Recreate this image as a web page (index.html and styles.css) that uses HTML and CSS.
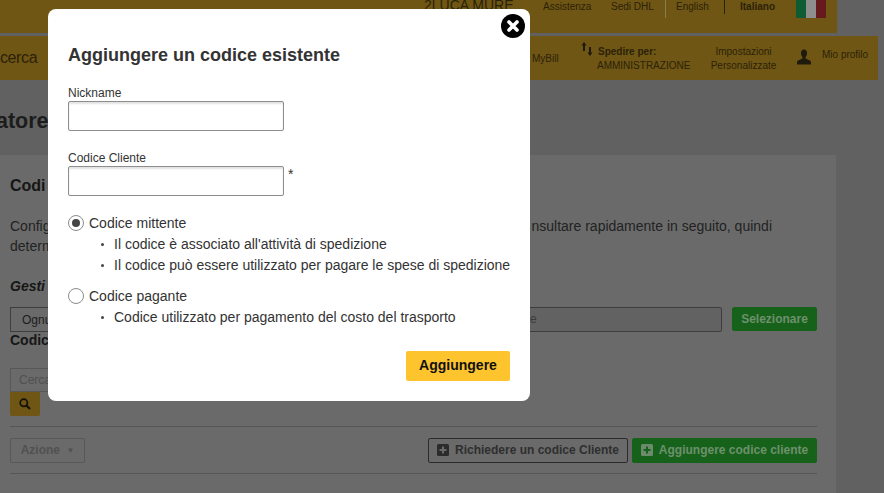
FILE: index.html
```html
<!DOCTYPE html>
<html lang="it">
<head>
<meta charset="utf-8">
<title>Aggiungere un codice esistente</title>
<link rel="stylesheet" href="styles.css">
</head>
<body>
<div class="stage">
<div class="page">
  <header class="topbar">
    <span class="user">2LUCA MURE</span>
    <a class="toplink link-a">Assistenza</a>
    <a class="toplink link-b">Sedi DHL</a>
    <i class="sep sep-a"></i>
    <a class="toplink link-c">English</a>
    <i class="sep sep-b"></i>
    <b class="toplink link-d">Italiano</b>
    <span class="flag"><i class="fg"></i><i class="fw"></i><i class="fr"></i></span>
  </header>
  <nav class="navbar">
    <span class="nav-search">cerca</span>
    <span class="nav-mybill">MyBill</span>
    <svg class="nav-swap" viewBox="0 0 12 14" width="12" height="14"><path d="M3 0 L5.500 3.500 H4 V9 H2 V3.500 H0.500 Z M8 5 H10 V10.500 H11.500 L9 14 L6.500 10.500 H8 Z" fill="#1e1a0c"/></svg>
    <div class="nav-ship"><b>Spedire per:</b><span>AMMINISTRAZIONE</span></div>
    <div class="nav-settings"><span>Impostazioni</span><span>Personalizzate</span></div>
    <svg class="nav-user" viewBox="0 0 16 16" width="16" height="16"><path d="M8 0.500 C5.800 0.500 4.800 2.200 5 4.500 C5.100 6 5.700 7.300 6.400 8 V9.500 C4.500 10.500 1.500 11 1 13 V15.500 H15 V13 C14.500 11 11.500 10.500 9.600 9.500 V8 C10.300 7.300 10.900 6 11 4.500 C11.200 2.200 10.200 0.500 8 0.500 Z" fill="#1e1a0c"/></svg>
    <span class="nav-profile">Mio profilo</span>
  </nav>
  <h1 class="page-title">atore</h1>
  <main class="panel">
    <h2 class="panel-title">Codi</h2>
    <div class="intro">
      <div class="intro-line"><span>Config</span><span>nsultare rapidamente in seguito, quindi</span></div>
      <div>determ</div>
    </div>
    <h3 class="manage">Gesti</h3>
    <div class="select-row">
      <div class="select-box">Ognu</div>
      <div class="select-field">e</div>
      <button class="btn btn-green btn-select">Selezionare</button>
    </div>
    <h3 class="codes">Codic</h3>
    <div class="search-box">Cerca</div>
    <button class="search-btn" aria-label="Cerca">
      <svg viewBox="0 0 12 12" width="12" height="12"><circle cx="4.800" cy="4.800" r="3.600" fill="none" stroke="#14100a" stroke-width="1.700"/><path d="M7.500 7.500 L11 11" stroke="#14100a" stroke-width="2.200"/></svg>
    </button>
    <div class="action-row">
      <button class="btn-action">Azione <small>▼</small></button>
      <div class="action-right">
        <button class="btn btn-outline"><svg class="plus" viewBox="0 0 12 12" width="12" height="12"><rect width="12" height="12" rx="1.500" fill="#2b2b2b"/><path d="M6 2.500 V9.500 M2.500 6 H9.500" stroke="#6a6a6a" stroke-width="2"/></svg>Richiedere un codice Cliente</button>
        <button class="btn btn-green btn-add"><svg class="plus" viewBox="0 0 12 12" width="12" height="12"><rect width="12" height="12" rx="1.500" fill="#6c8a6c"/><path d="M6 2.500 V9.500 M2.500 6 H9.500" stroke="#17621a" stroke-width="2"/></svg>Aggiungere codice cliente</button>
      </div>
    </div>
  </main>
</div>

<section class="modal">
  <button class="close" aria-label="Chiudi">
    <svg viewBox="0 0 24 24" width="24" height="24"><circle cx="12" cy="12" r="12" fill="#000"/><path d="M8 8 L16 16 M16 8 L8 16" stroke="#fff" stroke-width="3.600" stroke-linecap="round"/></svg>
  </button>
  <h2 class="modal-title">Aggiungere un codice esistente</h2>
  <label class="field-label">Nickname</label>
  <input class="field" type="text">
  <label class="field-label second">Codice Cliente</label>
  <div class="field-row"><input class="field" type="text"><span class="req">*</span></div>
  <div class="choice first">
    <span class="radio checked"></span><span>Codice mittente</span>
  </div>
  <ul class="notes">
    <li>Il codice è associato all'attività di spedizione</li>
    <li>Il codice può essere utilizzato per pagare le spese di spedizione</li>
  </ul>
  <div class="choice">
    <span class="radio"></span><span>Codice pagante</span>
  </div>
  <ul class="notes">
    <li>Codice utilizzato per pagamento del costo del trasporto</li>
  </ul>
  <div class="modal-actions"><button class="btn-yellow">Aggiungere</button></div>
</section>
</div>
</body>
</html>
```
FILE: styles.css
```css
* { box-sizing: border-box; }
html, body { margin: 0; height: 493px; overflow: hidden; }
body {
  background: #616161;
  font-family: "Liberation Sans", Arial, sans-serif;
  color: #1c1c1c;
}
.stage { position: relative; width: 884px; height: 493px; overflow: hidden; }
button { font-family: inherit; padding: 0; cursor: pointer; }

/* dimmed page */
.page { width: 884px; height: 493px; overflow: hidden; }
.topbar {
  position: relative;
  width: 837px;
  height: 33px;
  background: #705614;
  font-size: 10px;
  color: #2a2208;
}
.topbar > * { position: absolute; }
.user { left: 424px; top: -3px; font-size: 14px; line-height: 16px; }
.toplink { top: 1px; line-height: 12px; }
.link-a { left: 543px; }
.link-b { left: 611px; }
.link-c { left: 676px; }
.link-d { left: 740px; }
.sep { top: 0; width: 1px; height: 18px; background: #8a7a50; }
.sep-a { left: 665px; }
.sep-b { left: 724px; height: 14px; background: #2a2208; }
.flag { left: 796px; top: 0; display: flex; width: 30px; height: 18px; }
.flag i { flex: 1; }
.fg { background: #0f5c32; }
.fw { background: #8e8e8e; }
.fr { background: #661a1e; }

.navbar {
  position: relative;
  width: 878px;
  height: 44px;
  margin-top: 3px;
  background: #705614;
  font-size: 10px;
  color: #2a2208;
}
.navbar > * { position: absolute; }
.nav-search { left: 0; top: 13px; font-size: 16px; line-height: 18px; letter-spacing: -.4px; }
.nav-mybill { left: 532px; top: 17px; line-height: 12px; }
.nav-swap { left: 581px; top: 6px; }
.nav-ship { left: 597px; top: 10px; display: flex; flex-direction: column; gap: 2px; line-height: 12px; }
.nav-ship b { padding-left: 1px; }
.nav-settings { left: 711px; top: 10px; width: 65px; display: flex; flex-direction: column; align-items: center; gap: 2px; line-height: 12px; }
.nav-user { left: 796px; top: 13px; }
.nav-profile { left: 822px; top: 13px; line-height: 12px; white-space: nowrap; }

.page-title {
  height: 75px;
  margin: 0 0 0 -4px;
  padding-top: 28px;
  font-size: 21.500px;
  line-height: 26px;
  font-weight: bold;
  color: #1c1c1c;
}
.panel {
  width: 836px;
  height: 338px;
  padding: 21px 19px 0 10px;
  background: #6a6a6a;
}
.panel-title { margin: 0; font-size: 16px; line-height: 20px; color: #161616; }
.intro { margin-top: 20px; font-size: 14px; line-height: 20px; color: #222; }
.intro-line { display: flex; justify-content: space-between; padding-right: 45px; }
.manage { margin: 20px 0 0; font-size: 14px; line-height: 20px; font-style: italic; font-weight: bold; color: #161616; }
.select-row { display: flex; align-items: flex-start; gap: 10px; margin-top: 11px; height: 25px; }
.select-box {
  flex: none;
  width: 200px;
  height: 25px;
  padding: 5px 0 0 11px;
  border: 1px solid #3e3e3e;
  font-size: 12px;
  line-height: 14px;
  color: #1c1c1c;
}
.select-field {
  flex: 1;
  height: 25px;
  margin-left: -10px;
  padding: 3px 0 0 319px;
  background: #626262;
  border: 1px solid #3e3e3e;
  border-radius: 2px;
  font-size: 12px;
  line-height: 16px;
  color: #3c3c3c;
}
.btn {
  display: inline-flex;
  align-items: center;
  justify-content: center;
  flex: none;
  border-radius: 2px;
  font-size: 12px;
  font-weight: bold;
}
.btn-green { background: #17621a; border: 1px solid #17621a; color: #6d906d; }
.btn-select { width: 85px; height: 24px; }
.codes { margin: -1px 0 0; font-size: 14px; line-height: 18px; color: #161616; }
.search-box {
  width: 120px;
  height: 24px;
  margin-top: 19px;
  padding: 4px 0 0 8px;
  border: 1px solid #575757;
  font-size: 12px;
  line-height: 14px;
  color: #505050;
}
.search-btn {
  display: flex;
  align-items: center;
  justify-content: center;
  width: 30px;
  height: 24px;
  background: #705614;
  border: 0;
  border-radius: 0 0 2px 2px;
}
.action-row {
  display: flex;
  justify-content: space-between;
  margin-top: 10px;
  padding: 11px 0 10px;
  height: 48px;
  border-top: 1px solid #565656;
  border-bottom: 1px solid #565656;
}
.btn-action {
  width: 75px;
  height: 25px;
  padding: 0 0 1px;
  background: #6a6a6a;
  border: 1px solid #585858;
  border-radius: 2px;
  font-size: 12px;
  font-weight: bold;
  color: #515151;
}
.btn-action small { font-size: 8px; margin-left: 3px; vertical-align: 1px; }
.action-right { display: flex; gap: 4px; }
.btn-outline { width: 200px; height: 25px; padding-bottom: 1px; background: #6a6a6a; border: 1px solid #2b2b2b; color: #2f2f2f; }
.btn-add { width: 185px; height: 25px; padding-bottom: 1px; }
.plus { margin-right: 6px; flex: none; }

/* dialog */
.modal {
  position: absolute;
  left: 48px;
  top: 9px;
  width: 482px;
  height: 392px;
  padding: 36px 20px 0;
  background: #fff;
  border-radius: 8px;
  color: #333;
}
.close {
  position: absolute;
  right: 5px;
  top: 5px;
  width: 24px;
  height: 24px;
  background: none;
  border: 0;
}
.close svg { display: block; }
.modal-title { margin: 0; font-size: 18px; line-height: 20px; color: #333; }
.field-label { display: block; font-size: 12px; line-height: 14px; }
.modal-title + .field-label { margin-top: 21px; }
.field-label.second { margin-top: 20px; }
.field {
  display: block;
  width: 216px;
  height: 30px;
  margin: 1px 0 0;
  padding: 0 8px;
  background: #fff;
  border: 1px solid #8e8e8e;
  border-radius: 2px;
  box-shadow: inset 0 2px 2px #e2e2e2;
}
.field-row { display: flex; align-items: flex-start; }
.req { margin: 1px 0 0 4px; font-size: 14px; line-height: 16px; }
.choice { display: flex; align-items: center; gap: 5px; height: 20px; margin-top: 10px; font-size: 14px; line-height: 20px; }
.choice.first { margin-top: 17px; }
.radio {
  position: relative;
  width: 16px;
  height: 16px;
  background: #fff;
  border: 1px solid #8c8c8c;
  border-radius: 50%;
}
.radio.checked::after {
  content: "";
  position: absolute;
  left: 3px;
  top: 3px;
  width: 8px;
  height: 8px;
  background: #444;
  border-radius: 50%;
}
.notes { margin: 1px 0 0; padding: 0 0 0 46px; font-size: 14px; line-height: 21px; list-style: none; }
.notes li { position: relative; white-space: nowrap; }
.notes li::before {
  content: "";
  position: absolute;
  left: -13px;
  top: 9px;
  width: 3px;
  height: 3px;
  background: #444;
  border-radius: 50%;
}
.modal-actions { display: flex; justify-content: flex-end; margin-top: 23px; }
.btn-yellow {
  width: 104px;
  height: 30px;
  padding-bottom: 2px;
  background: #fdc42d;
  border: 0;
  border-radius: 2px;
  font-size: 14px;
  font-weight: bold;
  color: #111;
}
```
